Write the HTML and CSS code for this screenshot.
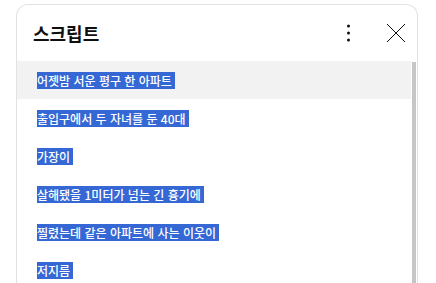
FILE: index.html
```html
<!DOCTYPE html>
<html lang="ko">
<head>
    <meta charset="UTF-8">
    <meta name="viewport" content="width=device-width, initial-scale=1.0">
    <title>스크립트</title>
    <link rel="stylesheet" href="styles.css">
</head>
<body>
    <div class="panel">
        <div class="panel-header">
            <h2 class="panel-title">스크립트</h2>
            <div class="header-actions">
                <button class="icon-btn" aria-label="더보기">
                    <svg width="24" height="24" viewBox="0 0 24 24">
                        <circle cx="11.5" cy="5" r="1.5" fill="#0f0f0f"/>
                        <circle cx="11.5" cy="12" r="1.5" fill="#0f0f0f"/>
                        <circle cx="11.5" cy="19" r="1.5" fill="#0f0f0f"/>
                    </svg>
                </button>
                <button class="icon-btn" aria-label="닫기">
                    <svg width="24" height="24" viewBox="0 0 24 24">
                        <path d="M3 3 L21 21 M21 3 L3 21" stroke="#0f0f0f" stroke-width="1" fill="none"/>
                    </svg>
                </button>
            </div>
        </div>

        <div class="panel-body">
            <ul class="script-list">
                <li class="script-row active"><span class="sel">어젯밤 서운 평구 한 아파트 </span></li>
                <li class="script-row"><span class="sel">출입구에서 두 자녀를 둔 40대 </span></li>
                <li class="script-row"><span class="sel">가장이 </span></li>
                <li class="script-row"><span class="sel">살해됐을 1미터가 넘는 긴 흉기에 </span></li>
                <li class="script-row"><span class="sel">찔렸는데 같은 아파트에 사는 이웃이 </span></li>
                <li class="script-row"><span class="sel">저지름 </span></li>
            </ul>
            <div class="scrollbar">
                <div class="scroll-thumb"></div>
            </div>
        </div>
    </div>
</body>
</html>
```

FILE: styles.css
```css
html, body {
    height: 100%;
}
body {
    margin: 0;
    font-family: "Noto Sans CJK KR", "Noto Sans", sans-serif;
    background-color: #fff;
    overflow: hidden;
}
.panel {
    width: 402px;
    height: calc(100% - 4px);
    box-sizing: border-box;
    margin: 4px 0 0 16px;
    border: 1px solid #e2e2e2;
    border-bottom: none;
    border-radius: 12px 12px 0 0;
    background-color: #fff;
    display: flex;
    flex-direction: column;
    overflow: hidden;
}
.panel-header {
    height: 56px;
    flex-shrink: 0;
    display: flex;
    align-items: center;
    justify-content: space-between;
    padding: 0 9px 0 16px;
}
.panel-title {
    margin: 0;
    font-size: 18px;
    font-weight: 700;
    color: #0f0f0f;
}
.header-actions {
    display: flex;
    align-items: center;
    gap: 23px;
}
.icon-btn {
    width: 24px;
    height: 24px;
    padding: 0;
    border: none;
    background: none;
    display: flex;
}
.panel-body {
    flex: 1;
    display: flex;
    min-height: 0;
}
.script-list {
    flex: 1;
    margin: 0;
    padding: 0;
    list-style: none;
}
.script-row {
    height: 38px;
    display: flex;
    align-items: center;
    padding-left: 20px;
    font-size: 12px;
    font-weight: 500;
}
.script-row.active {
    background-color: #f2f2f2;
}
.sel {
    background-color: #3568d4;
    color: #fff;
    white-space: pre;
}
.scrollbar {
    width: 6px;
    padding: 1px 1px 0 1px;
    box-sizing: border-box;
}
.scroll-thumb {
    height: 100%;
    background-color: #c6c6c6;
}
```
